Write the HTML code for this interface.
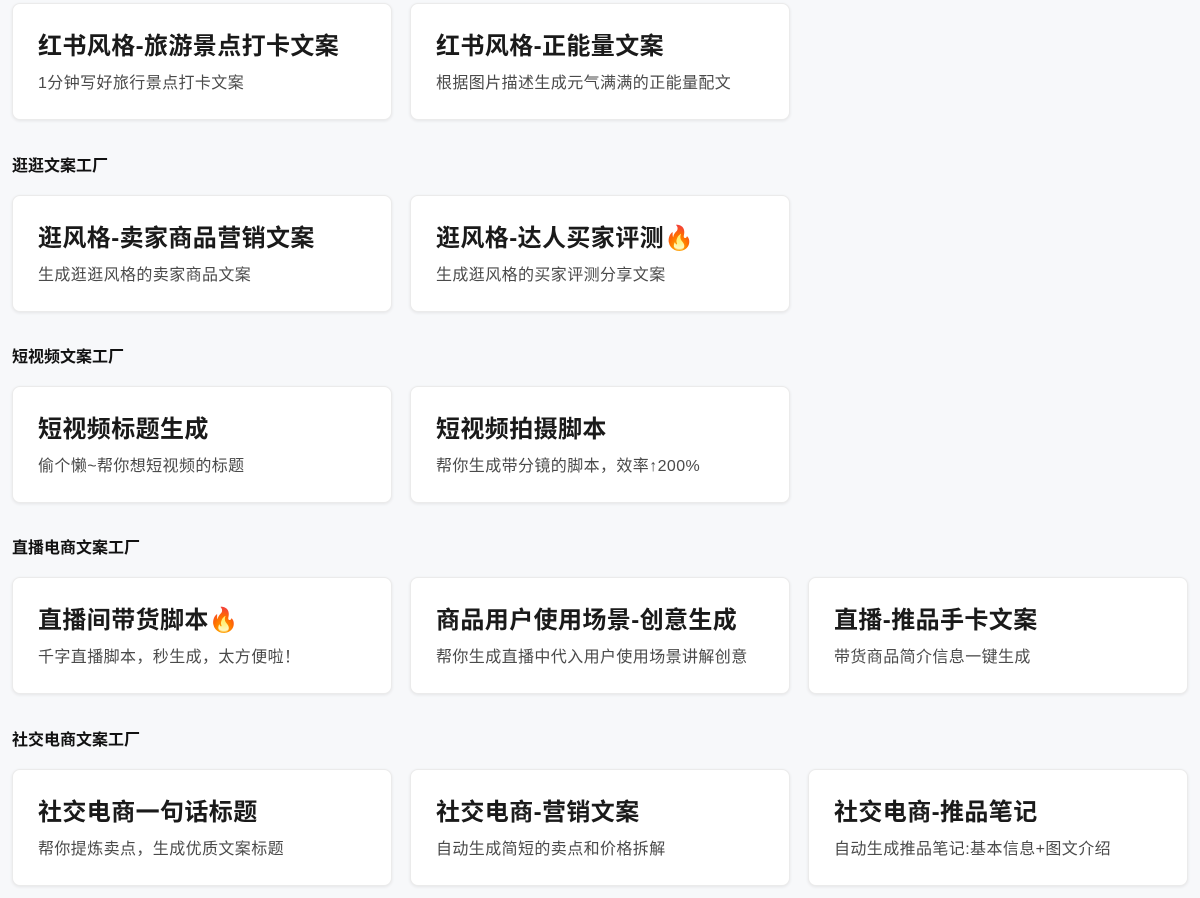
<!DOCTYPE html>
<html><head><meta charset="utf-8"><style>
body{margin:0;background:#f7f8fa;font-family:"Liberation Sans","Noto Sans CJK SC",sans-serif;width:1200px;height:898px;overflow:hidden;position:relative}
.card{position:absolute;width:380px;height:117px;background:#fff;border-radius:8px;border:1px solid #ebebeb;box-shadow:0 1px 3px rgba(0,0,0,.08);box-sizing:border-box}
.t{position:absolute;left:25px;top:27px;font-size:24px;font-weight:bold;color:#1a1a1a;line-height:32px;white-space:nowrap;letter-spacing:0.4px}
.s{position:absolute;left:25px;top:69px;font-size:16px;color:#4a4a4a;line-height:22px;white-space:nowrap;letter-spacing:0.4px}
.h{position:absolute;left:12px;font-size:16px;font-weight:bold;color:#111;line-height:20px}
</style></head><body>
<div class="card" style="left:12px;top:3px"><div class="t">红书风格-旅游景点打卡文案</div><div class="s">1分钟写好旅行景点打卡文案</div></div>
<div class="card" style="left:410px;top:3px"><div class="t">红书风格-正能量文案</div><div class="s">根据图片描述生成元气满满的正能量配文</div></div>
<div class="h" style="top:157px">逛逛文案工厂</div>
<div class="card" style="left:12px;top:195px"><div class="t">逛风格-卖家商品营销文案</div><div class="s">生成逛逛风格的卖家商品文案</div></div>
<div class="card" style="left:410px;top:195px"><div class="t">逛风格-达人买家评测🔥</div><div class="s">生成逛风格的买家评测分享文案</div></div>
<div class="h" style="top:348px">短视频文案工厂</div>
<div class="card" style="left:12px;top:386px"><div class="t">短视频标题生成</div><div class="s">偷个懒~帮你想短视频的标题</div></div>
<div class="card" style="left:410px;top:386px"><div class="t">短视频拍摄脚本</div><div class="s">帮你生成带分镜的脚本，效率↑200%</div></div>
<div class="h" style="top:539px">直播电商文案工厂</div>
<div class="card" style="left:12px;top:577px"><div class="t">直播间带货脚本🔥</div><div class="s">千字直播脚本，秒生成，太方便啦！</div></div>
<div class="card" style="left:410px;top:577px"><div class="t">商品用户使用场景-创意生成</div><div class="s">帮你生成直播中代入用户使用场景讲解创意</div></div>
<div class="card" style="left:808px;top:577px"><div class="t">直播-推品手卡文案</div><div class="s">带货商品简介信息一键生成</div></div>
<div class="h" style="top:731px">社交电商文案工厂</div>
<div class="card" style="left:12px;top:769px"><div class="t">社交电商一句话标题</div><div class="s">帮你提炼卖点，生成优质文案标题</div></div>
<div class="card" style="left:410px;top:769px"><div class="t">社交电商-营销文案</div><div class="s">自动生成简短的卖点和价格拆解</div></div>
<div class="card" style="left:808px;top:769px"><div class="t">社交电商-推品笔记</div><div class="s">自动生成推品笔记:基本信息+图文介绍</div></div>
</body></html>
